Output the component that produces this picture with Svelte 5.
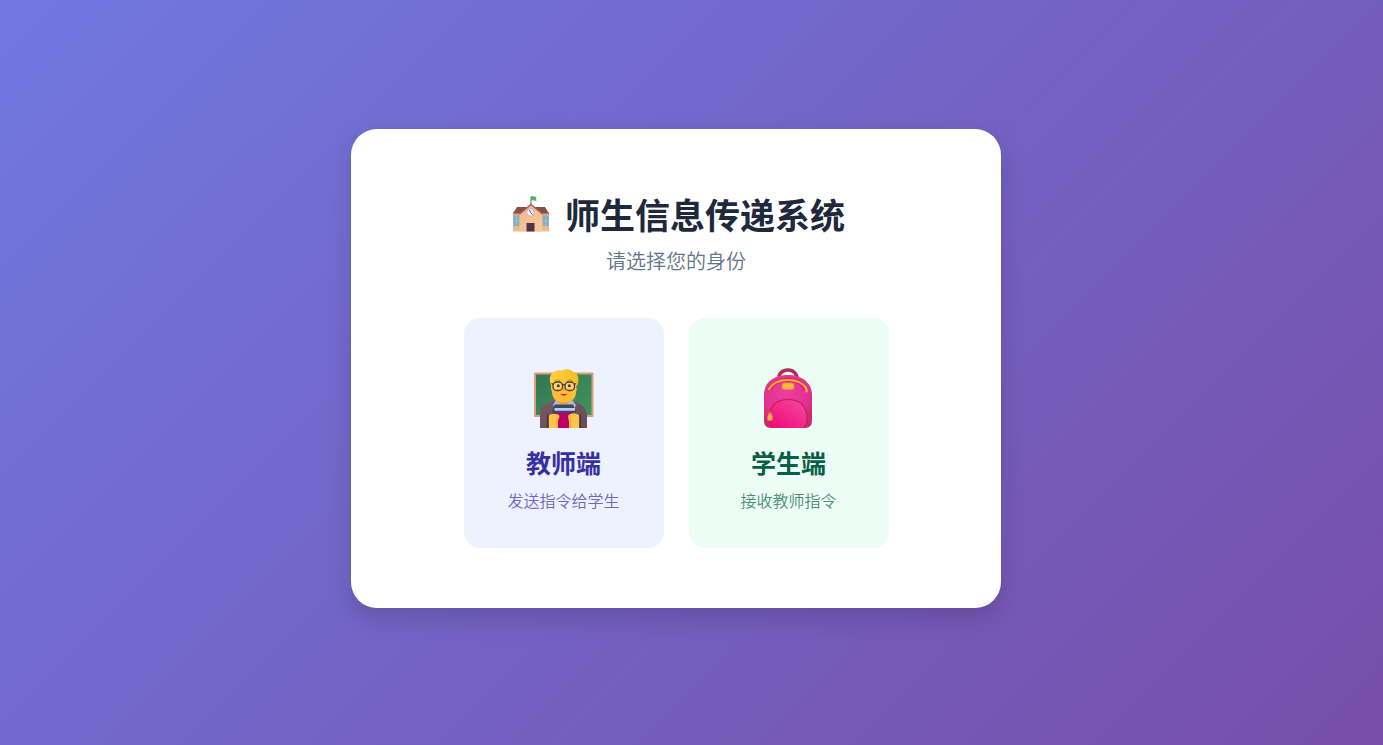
<script>
  const roles = [
    { id: "teacher", title: "教师端", desc: "发送指令给学生" },
    { id: "student", title: "学生端", desc: "接收教师指令" },
  ];
  let selected = $state("");
</script>

<main>
  <section class="card">
    <h1>
      <svg class="school" viewBox="0 0 38 38" aria-hidden="true">
        <defs>
          <linearGradient id="wall" x1="0" y1="0" x2="1" y2="1">
            <stop offset="0" stop-color="#efb890" />
            <stop offset="1" stop-color="#fdc994" />
          </linearGradient>
          <linearGradient id="wing" x1="0" y1="0" x2="0" y2="1">
            <stop offset="0" stop-color="#d89f80" />
            <stop offset="1" stop-color="#f4bd91" />
          </linearGradient>
        </defs>
        <path d="M1 17h36v19.500H1z" fill="url(#wing)" />
        <path d="M5 12h28l4 6.500H1z" fill="#865147" />
        <path d="M19 9.500 8 19v17.500h22V19z" fill="url(#wall)" />
        <path d="M7.500 19 19 9.500 30.500 19" fill="none" stroke="#9c6552" stroke-width="1.600" />
        <path d="M19 9V2" stroke="#6d665f" stroke-width="1" />
        <path d="M19 1.500c2-1.500 3 .8 5.500.3-.8 1.200-.5 2.700.2 3.700-2.500 1-3.700-1.200-5.700 0z" fill="#43b96d" />
        <circle cx="18.500" cy="17.500" r="3.800" fill="#f4f0f6" stroke="#b9a8b5" stroke-width=".8" />
        <path d="M17.500 15l1 2.500 2 2" fill="none" stroke="#65505f" />
        <path d="M1.500 21h5.500v10H1.500zM31 21h5.500v10H31z" fill="#62b6dd" />
        <path d="M4.300 21v10M1.500 26h5.500M33.700 21v10M31 26h5.500" stroke="#d9b5a1" stroke-width=".8" />
        <path d="M14.500 28h8v8.500h-8z" fill="#4d3547" />
      </svg>
      <span>师生信息传递系统</span>
    </h1>
    <p class="subtitle">请选择您的身份</p>

    <div class="roles">
      {#each roles as role}
        <button class="role {role.id}" aria-pressed={selected === role.id} onclick={() => (selected = role.id)}>
          {#if role.id === "teacher"}
            <svg class="icon" viewBox="0 0 60 60" aria-hidden="true">
              <defs>
                <linearGradient id="board" x1="0" y1="0" x2="1" y2="1">
                  <stop offset="0" stop-color="#367550" />
                  <stop offset="1" stop-color="#3f9461" />
                </linearGradient>
                <linearGradient id="hair" x1="0" y1="0" x2="1" y2="0">
                  <stop offset="0" stop-color="#ffd044" />
                  <stop offset="1" stop-color="#f3bf1c" />
                </linearGradient>
                <linearGradient id="skin" x1="0" y1="0" x2="0" y2="1">
                  <stop offset="0" stop-color="#f9c43c" />
                  <stop offset="1" stop-color="#fcba36" />
                </linearGradient>
                <linearGradient id="coat" x1="0" y1="0" x2="1" y2="1">
                  <stop offset="0" stop-color="#775861" />
                  <stop offset="1" stop-color="#655054" />
                </linearGradient>
              </defs>
              <rect x="0" y="4.500" width="59.500" height="44.500" rx="1" fill="#d9a078" />
              <path d="M2 6.500h55.500V47H2z" fill="url(#board)" />
              <path d="M6 60V47c0-8 5-12 14-14h18c9 2 15 7 15 14v13z" fill="url(#coat)" />
              <path d="m22 32-3 5 4 10h15l4-10-4-5z" fill="#bdb2c9" />
              <path d="M24 30v4q5.500 5 11 0v-4z" fill="#e5a02b" />
              <path d="M17.500 10h24.500v9l1 2-1 3c0 7-5 10.500-12 10.500S18 31 18 24l-1-3z" fill="url(#skin)" />
              <path d="M18 19c-3-5-3-12 1-14 2-3 6-3 9-2.500 4-2 9-2 11 1.500 6 1 7 9 3.500 15L41 11c-3 1.500-6 0-8-1-4 3-9 3-12 2z" fill="url(#hair)" />
              <g fill="#fff2bc" fill-opacity=".4" stroke="#4e3731" stroke-width="1.300">
                <rect x="19" y="14" width="9.500" height="8.500" rx="3.800" />
                <rect x="31" y="14" width="9.500" height="8.500" rx="3.800" />
                <path d="M28.500 17q1.200-1 2.500 0M17.500 15.500l2 1M42 15.500l-2 1" fill="none" />
              </g>
              <circle cx="24.300" cy="17.800" r="1.500" fill="#4d342f" />
              <circle cx="35.300" cy="17.800" r="1.500" fill="#4d342f" />
              <path d="M21 12.500q2.500-1.500 5 0M33.500 12.500q2.500-1.500 5 0" fill="none" stroke="#b67926" stroke-width=".8" />
              <path d="M29.500 20q-1 3 1 3" fill="none" stroke="#e49c22" />
              <path d="M26 25.500q3.500 1 7.500 0-3.500 4.500-7.500 0z" fill="#bd2c50" />
              <path d="M18.500 43h22.500v17H18.500z" fill="#9b075e" />
              <path d="M21 44h19v16H21z" fill="#bb006c" />
              <path d="m20 37.500 1.500-1h17.500l2.500 5.500v3H18.500v-3z" fill="#3f4566" />
              <path d="M20.500 40h20.500v2.800H20.500z" fill="#c0cbed" />
              <path d="M15 60V47.500c2-2.500 9-2.500 10.500.5l-1.500 5v7zM35 60v-6l-1-6c1.500-3 8-4 11-.5V60z" fill="#ffc444" />
              <path d="M23 60V50M36.500 60V50" stroke="#eda82d" stroke-width="1.200" />
              <path d="M13.500 46v14M46.500 46v14" stroke="#4b3a45" stroke-width="1.400" />
            </svg>
          {:else}
            <svg class="icon" viewBox="0 0 60 60" aria-hidden="true">
              <defs>
                <radialGradient id="bag" cx=".45" cy=".3" r=".7">
                  <stop offset="0" stop-color="#ed409d" />
                  <stop offset=".7" stop-color="#e23091" />
                  <stop offset="1" stop-color="#c62d69" />
                </radialGradient>
                <linearGradient id="pocket" x1="1" y1="0" x2="0" y2="1">
                  <stop offset="0" stop-color="#f849a0" />
                  <stop offset="1" stop-color="#ed0875" />
                </linearGradient>
              </defs>
              <path d="M20 12c-1-7 4-10 9-10s10 4 9 10" fill="none" stroke="#ad3055" stroke-width="3.500" />
              <path d="M5 27C5 14 15 7 29 7s24 8 24 20v26q0 7-7 7H12q-7 0-7-7z" fill="url(#bag)" />
              <path d="M10 22C17 8 41 8 47 22" fill="none" stroke="#d92c64" stroke-width="4.500" />
              <path d="M10 21C17 9 41 9 47.500 21v2.500" fill="none" stroke="#ffad3e" stroke-width="2.200" stroke-linecap="round" />
              <rect x="23" y="15" width="12" height="6.500" rx="2.500" fill="#ffb344" stroke="#e98641" stroke-width=".7" />
              <path d="M10 54v-5c0-12 8-17 19.500-17S48 38 48 49v5q0 6-5 6H15q-5 0-5-6z" fill="url(#pocket)" />
              <path d="M10.500 46c2-10 9-14.500 18.500-14.500S46 36 48 47v7q-1 4-3 5.500" fill="none" stroke="#c51b57" stroke-width="1.200" />
              <path d="M9.500 45h3v2.500h1V52q-2.500 1.500-5 0v-4.500h1z" fill="#ffb13f" />
              <path d="M11 43v4" stroke="#df8038" />
            </svg>
          {/if}
          <span class="title">{role.title}</span>
          <span class="desc">{role.desc}</span>
        </button>
      {/each}
    </div>
  </section>
</main>

<style>
  :global(body) {
    margin: 0;
  }

  main {
    box-sizing: border-box;
    min-height: 100vh;
    padding: 0 31px 8px 0;
    display: flex;
    align-items: center;
    justify-content: center;
    font-family: "Noto Sans CJK SC", sans-serif;
    background: linear-gradient(135deg, #7078e0 0%, #774ea9 100%);
  }

  .card {
    box-sizing: border-box;
    width: 100%;
    max-width: 650px;
    padding: 60px;
    border-radius: 26px;
    background: #fff;
    box-shadow: 0 10px 24px rgba(0, 0, 0, 0.15);
    text-align: center;
  }

  h1 {
    margin: 0;
    display: flex;
    align-items: center;
    justify-content: center;
    gap: 10px;
    color: #1e293b;
    font-size: 35px;
    line-height: 50px;
    font-weight: 700;
  }

  .school {
    width: 48px;
    height: 38px;
  }

  .subtitle {
    margin: 6px 0 42px;
    color: #64748b;
    font-size: 20px;
    line-height: 31px;
    font-weight: 350;
  }

  .roles {
    display: flex;
    justify-content: center;
    flex-wrap: wrap;
    gap: 25px;
  }

  .role {
    width: 200px;
    padding: 50px 20px 36px;
    display: flex;
    flex-direction: column;
    align-items: center;
    border: none;
    border-radius: 16px;
    font-family: inherit;
    cursor: pointer;
  }

  .teacher {
    background: #eef2ff;
    color: #3730a3;
  }

  .student {
    background: #ecfdf5;
    color: #065f46;
  }

  .icon {
    width: 60px;
    height: 60px;
  }

  .title {
    margin-top: 16px;
    font-size: 25px;
    line-height: 36px;
    font-weight: 700;
  }

  .desc {
    margin-top: 8px;
    font-size: 16px;
    line-height: 24px;
    font-weight: 350;
    opacity: 0.7;
  }
</style>
